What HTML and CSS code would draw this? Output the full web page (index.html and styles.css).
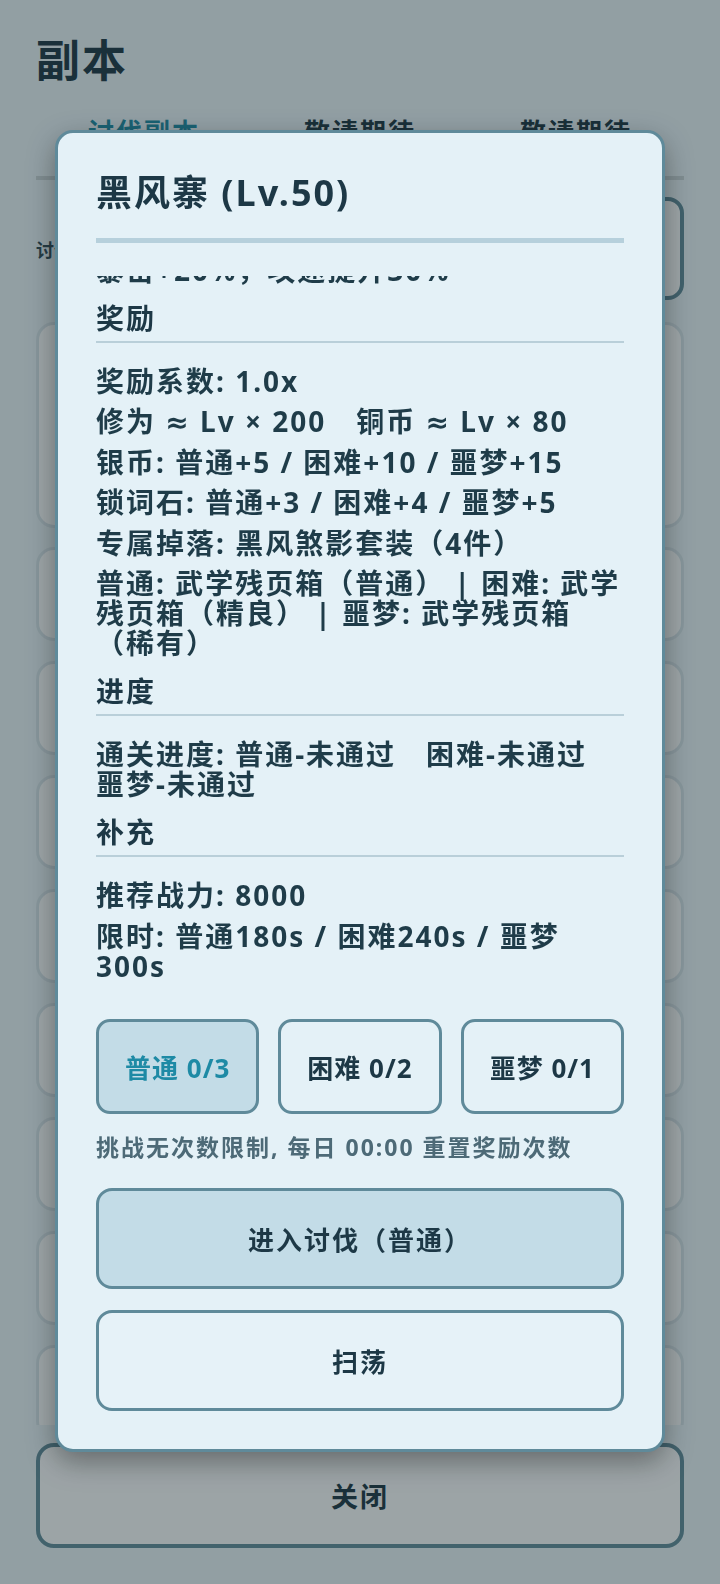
FILE: index.html
```html
<!DOCTYPE html>
<html lang="zh-CN">
<head>
<meta charset="utf-8">
<title>副本</title>
<link rel="stylesheet" href="styles.css">
</head>
<body>
<div class="page">
  <h1 class="page-title">副本</h1>
  <div class="tabs">
    <div class="tab active">讨伐副本</div>
    <div class="tab">敬请期待</div>
    <div class="tab">敬请期待</div>
  </div>
  <div class="toolbar">
    <span class="toolbar-label">讨伐令：不限次数</span>
    <button class="toolbar-btn">一键扫荡</button>
  </div>
  <div class="list">
    <div class="card tall"><span class="card-name">黑风寨 Lv.50</span></div>
    <div class="card"><span class="card-name">落霞谷 Lv.60</span></div>
    <div class="card"><span class="card-name">寒水洞 Lv.70</span></div>
    <div class="card"><span class="card-name">赤焰山 Lv.80</span></div>
    <div class="card"><span class="card-name">幽冥殿 Lv.90</span></div>
    <div class="card"><span class="card-name">天机阁 Lv.100</span></div>
    <div class="card"><span class="card-name">万剑冢 Lv.110</span></div>
    <div class="card"><span class="card-name">青龙渊 Lv.120</span></div>
    <div class="card"><span class="card-name">太虚境 Lv.130</span></div>
  </div>
  <button class="close-btn">关闭</button>
</div>

<div class="overlay">
  <div class="modal">
    <div class="modal-head">
      <h2 class="modal-title">黑风寨 (Lv.50)</h2>
    </div>
    <div class="modal-body">
      <div class="modal-scroll">
        <section class="sec">
          <h3 class="sec-title">机制</h3>
          <div class="sec-items">
            <p>首领血量低于50%进入狂暴</p>
            <p>暴击+20%，攻速提升30%</p>
          </div>
        </section>
        <section class="sec">
          <h3 class="sec-title">奖励</h3>
          <div class="sec-items">
            <p>奖励系数: 1.0x</p>
            <p>修为 ≈ Lv × 200&emsp;铜币 ≈ Lv × 80</p>
            <p>银币: 普通+5 / 困难+10 / 噩梦+15</p>
            <p>锁词石: 普通+3 / 困难+4 / 噩梦+5</p>
            <p>专属掉落: 黑风煞影套装（4件）</p>
            <p>普通: 武学残页箱（普通） | 困难: 武学残页箱（精良） | 噩梦: 武学残页箱（稀有）</p>
          </div>
        </section>
        <section class="sec">
          <h3 class="sec-title">进度</h3>
          <div class="sec-items">
            <p>通关进度: 普通-未通过&emsp;困难-未通过&emsp;噩梦-未通过</p>
          </div>
        </section>
        <section class="sec">
          <h3 class="sec-title">补充</h3>
          <div class="sec-items">
            <p>推荐战力: 8000</p>
            <p>限时: 普通180s / 困难240s / 噩梦300s</p>
          </div>
        </section>
      </div>
    </div>
    <div class="modal-foot">
      <div class="diff-row">
        <button class="diff on">普通 0/3</button>
        <button class="diff">困难 0/2</button>
        <button class="diff">噩梦 0/1</button>
      </div>
      <p class="hint">挑战无次数限制, 每日 00:00 重置奖励次数</p>
      <button class="action primary">进入讨伐（普通）</button>
      <button class="action">扫荡</button>
    </div>
  </div>
</div>
</body>
</html>
```

FILE: styles.css
```css
* { box-sizing: border-box; }

html, body {
  margin: 0;
  height: 100%;
}

body {
  font-family: "Noto Sans", "DejaVu Sans", "Noto Sans CJK SC", sans-serif;
  font-weight: 700;
  color: #1f3c49;
  background: #e4f0f6;
}

button {
  font-family: inherit;
  font-weight: 700;
  color: #1d3846;
  padding: 0;
  cursor: pointer;
}

/* ---------- page underneath ---------- */
.page {
  height: 100vh;
  display: flex;
  flex-direction: column;
  padding: 34px 36px 36px;
}

.page-title {
  margin: 0;
  font-size: 44px;
  line-height: 53px;
  letter-spacing: 2px;
  color: #1d3846;
}

.tabs {
  display: flex;
  border-bottom: 4px solid #c6d2d7;
}

.tab {
  flex: 1;
  text-align: center;
  font-size: 26px;
  line-height: 30px;
  padding: 30px 0 29px;
  letter-spacing: 2px;
  color: #1d3846;
}

.tab.active { color: #1e8aa5; }

.toolbar {
  display: flex;
  align-items: center;
  justify-content: space-between;
  margin-top: 17px;
  height: 103px;
  flex: none;
}

.toolbar-label {
  font-size: 18px;
  color: #2f4a57;
}

.toolbar-btn {
  width: 220px;
  height: 103px;
  border: 4px solid #5f8a9a;
  border-radius: 16px;
  background: #f6f9fb;
  font-size: 24px;
}

.list {
  flex: 1;
  min-height: 0;
  overflow: hidden;
  margin-top: 22px;
  display: flex;
  flex-direction: column;
  gap: 20px;
}

.card {
  flex: none;
  height: 94px;
  border: 3px solid #d3e1e9;
  border-radius: 18px;
  background: #f6f9fb;
  display: flex;
  align-items: center;
  padding: 0 24px;
  font-size: 24px;
}

.card.tall {
  height: 206px;
  margin-bottom: -1px;
}

.close-btn {
  flex: none;
  margin-top: 18px;
  height: 105px;
  border: 4px solid #5f8a9a;
  border-radius: 18px;
  background: #f6f9fb;
  font-size: 27px;
  letter-spacing: 2px;
}

/* ---------- modal ---------- */
.overlay {
  position: fixed;
  inset: 0;
  background: rgba(23, 38, 41, 0.4);
  display: flex;
  justify-content: center;
  align-items: flex-start;
  padding-top: 130px;
}

.modal {
  width: 610px;
  height: 1322px;
  border: 3px solid #5f8a9a;
  border-radius: 18px;
  background: #e4f1f7;
  padding: 38px;
  display: flex;
  flex-direction: column;
  box-shadow: 0 10px 28px rgba(0, 0, 0, 0.35);
}

.modal-head {
  flex: none;
  padding-bottom: 23px;
  border-bottom: 5px solid #b6d0dc;
  margin-bottom: 33px;
}

.modal-title {
  margin: 0;
  font-size: 36px;
  line-height: 44px;
  letter-spacing: 2px;
  color: #1d3846;
}

.modal-body {
  flex: 1;
  min-height: 0;
  overflow: hidden;
}

.modal-scroll { margin-top: -125px; }

.sec + .sec { margin-top: 18px; }

.sec-title {
  margin: 0;
  font-size: 28px;
  line-height: 31px;
  padding-bottom: 7px;
  border-bottom: 2px solid #b9cfd9;
  letter-spacing: 2px;
  color: #1d3846;
}

.sec-items {
  margin-top: 23px;
  display: flex;
  flex-direction: column;
  gap: 10.5px;
}

.sec-items p {
  margin: 0;
  font-size: 28px;
  line-height: 30px;
  letter-spacing: 2px;
}

.modal-foot { flex: none; }

.diff-row {
  display: flex;
  gap: 19px;
}

.diff {
  flex: 1;
  height: 95px;
  border: 3px solid #5f8a9a;
  border-radius: 14px;
  background: #e4f1f7;
  font-size: 26px;
  letter-spacing: 1px;
}

.diff.on {
  background: #c3dce7;
  color: #1e8aa5;
}

.hint {
  margin: 18px 0 0;
  font-size: 23px;
  line-height: 30px;
  letter-spacing: 2px;
  color: #4d6a77;
}

.action {
  display: block;
  width: 100%;
  height: 101px;
  margin-top: 26px;
  border: 3px solid #5f8a9a;
  border-radius: 16px;
  background: #e6f2f8;
  font-size: 26px;
  letter-spacing: 2px;
}

.action.primary { background: #c3dce7; }

.action + .action { margin-top: 21px; }
```
